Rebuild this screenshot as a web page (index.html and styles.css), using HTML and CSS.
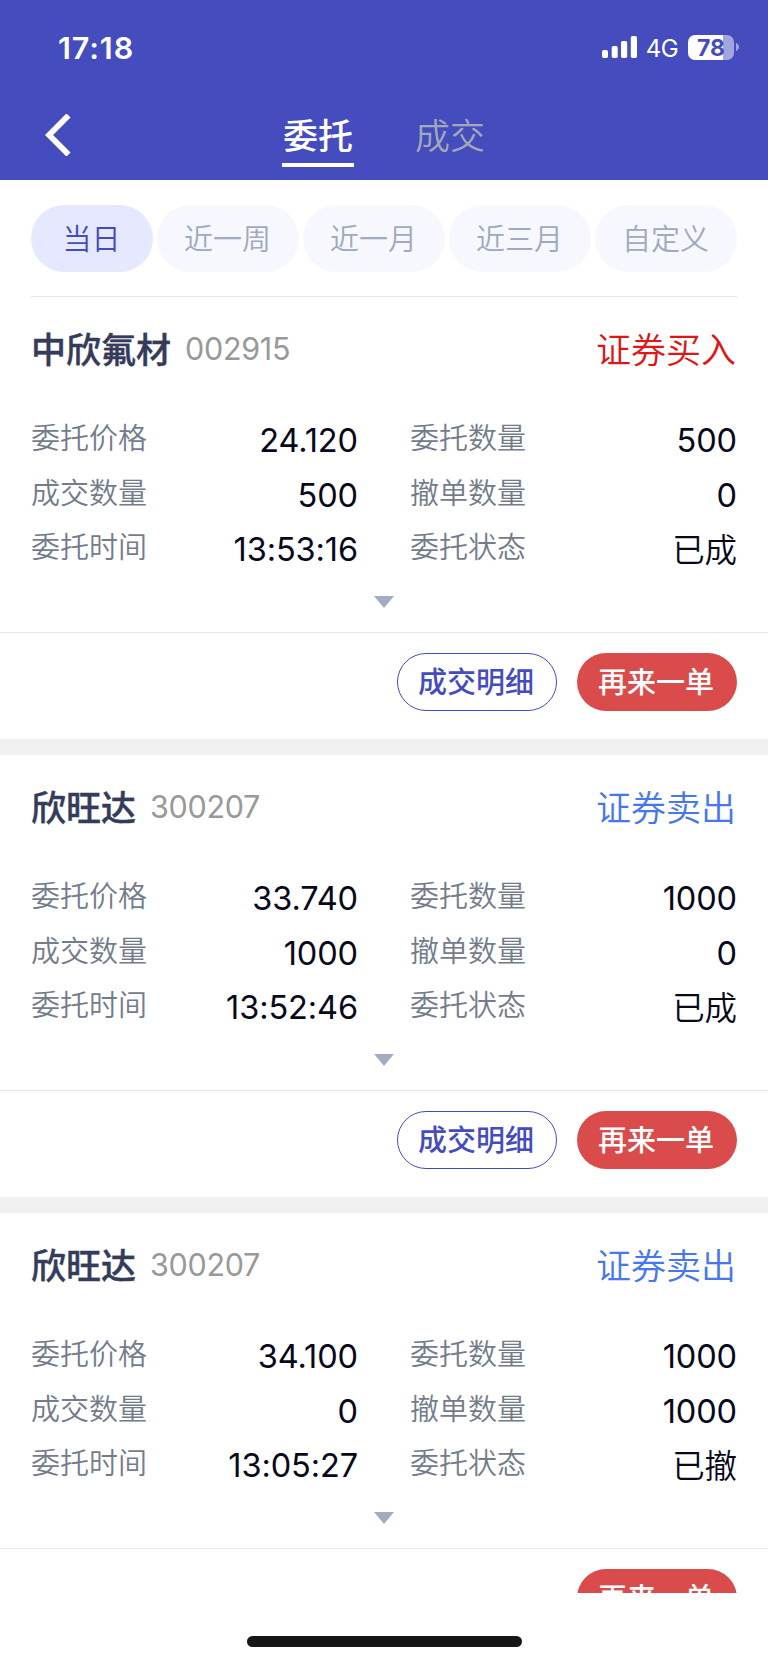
FILE: index.html
```html
<!DOCTYPE html>
<html lang="zh-CN">
<head>
<meta charset="utf-8">
<title>委托</title>
<link rel="stylesheet" href="styles.css">
</head>
<body>
<div class="screen">
	<div class="header">
		<div class="statusbar">
			<span class="time">17:18</span>
			<div class="status">
				<svg class="signal" width="35" height="22" viewBox="0 0 35 22" fill="#fff">
					<rect x="0" y="14" width="6" height="8" rx="1.8"/>
					<rect x="9.7" y="10" width="6" height="12" rx="1.8"/>
					<rect x="19" y="5" width="6.2" height="17" rx="1.8"/>
					<rect x="28.8" y="0" width="6.2" height="22" rx="1.8"/>
				</svg>
				<span class="network">4G</span>
				<div class="battery"><span>78</span></div>
				<svg class="cap" width="3" height="8" viewBox="0 0 3 8"><path d="M0 0C4 1.500 4 6.500 0 8Z" fill="#a2a5de"/></svg>
			</div>
		</div>
		<div class="nav">
			<svg class="back" width="26" height="42" viewBox="0 0 26 42"><path d="M23.500 1.500L4 21L23.500 40.500" fill="none" stroke="#fff" stroke-width="5.800"/></svg>
			<span class="tab active">委托</span>
			<span class="tab">成交</span>
		</div>
	</div>

	<div class="filters">
		<span class="pill on">当日</span>
		<span class="pill">近一周</span>
		<span class="pill">近一月</span>
		<span class="pill">近三月</span>
		<span class="pill">自定义</span>
	</div>

	<div class="list">
		<div class="card">
			<div class="title"><b>中欣氟材</b><span class="code">002915</span><span class="side buy">证券买入</span></div>
			<div class="grid">
				<label>委托价格</label><span>24.120</span><label class="second">委托数量</label><span>500</span>
				<label>成交数量</label><span>500</span><label class="second">撤单数量</label><span>0</span>
				<label>委托时间</label><span>13:53:16</span><label class="second">委托状态</label><span class="cn">已成</span>
			</div>
			<div class="more"></div>
			<div class="actions"><a class="btn detail">成交明细</a><a class="btn again">再来一单</a></div>
		</div>

		<div class="card">
			<div class="title"><b>欣旺达</b><span class="code">300207</span><span class="side sell">证券卖出</span></div>
			<div class="grid">
				<label>委托价格</label><span>33.740</span><label class="second">委托数量</label><span>1000</span>
				<label>成交数量</label><span>1000</span><label class="second">撤单数量</label><span>0</span>
				<label>委托时间</label><span>13:52:46</span><label class="second">委托状态</label><span class="cn">已成</span>
			</div>
			<div class="more"></div>
			<div class="actions"><a class="btn detail">成交明细</a><a class="btn again">再来一单</a></div>
		</div>

		<div class="card">
			<div class="title"><b>欣旺达</b><span class="code">300207</span><span class="side sell">证券卖出</span></div>
			<div class="grid">
				<label>委托价格</label><span>34.100</span><label class="second">委托数量</label><span>1000</span>
				<label>成交数量</label><span>0</span><label class="second">撤单数量</label><span>1000</span>
				<label>委托时间</label><span>13:05:27</span><label class="second">委托状态</label><span class="cn">已撤</span>
			</div>
			<div class="more"></div>
			<div class="actions"><a class="btn again">再来一单</a></div>
		</div>
	</div>

	<div class="home"><i></i></div>
</div>
</body>
</html>
```

FILE: styles.css
```css
* {
	box-sizing: border-box;
}

body {
	margin: 0;
	background: #fff;
	font-family: Inter, "Noto Sans CJK SC", sans-serif;
}

.screen {
	display: flex;
	flex-direction: column;
	width: 768px;
	height: 1663px;
	overflow: hidden;
}

/* header */
.header {
	height: 180px;
	background: #444cbe;
	color: #fff;
}

.statusbar {
	display: flex;
	justify-content: space-between;
	height: 94px;
	padding: 0 29px 0 58px;
	align-items: center;
}

.time {
	font-size: 30.5px;
	font-weight: 600;
	letter-spacing: 0.9px;
}

.status {
	display: flex;
	align-items: center;
}

.network {
	margin: 2px 10px 0 9px;
	font-size: 24px;
	letter-spacing: -0.6px;
}

.battery {
	width: 46px;
	height: 25px;
	border-radius: 7px;
	background: linear-gradient(to right, #fff 35px, #a2a5de 35px);
	color: #444cbe;
	font-size: 23px;
	font-weight: 700;
	line-height: 26px;
	text-align: center;
}

.cap {
	margin-left: 2px;
}

.nav {
	display: flex;
	height: 86px;
	padding-left: 45px;
}

.back {
	margin: 20px 211px 0 0;
}

.tab {
	width: 72px;
	height: 73px;
	margin-right: 60px;
	color: #a0a8b9;
	font-family: "Noto Sans CJK SC", sans-serif;
	font-size: 35px;
	font-weight: 350;
	line-height: 80px;
	text-align: center;
	white-space: nowrap;
}

.tab.active {
	color: #fff;
	font-weight: 500;
	border-bottom: 4px solid #fff;
}

/* date range */
.filters {
	display: flex;
	justify-content: space-between;
	height: 117px;
	margin: 0 31px;
	padding-top: 25px;
	border-bottom: 1px solid #e5e6e8;
}

.pill {
	width: 142px;
	height: 67px;
	padding-right: 1px;
	border-radius: 34px;
	background: #f7f8fd;
	color: #a0a9c0;
	font-family: "Noto Sans CJK SC", sans-serif;
	font-size: 29px;
	font-weight: 350;
	line-height: 65px;
	text-align: center;
}

.pill.on {
	width: 122px;
	background: #e5e8ff;
	color: #444cbe;
}

/* orders */
.list {
	height: 1296px;
	overflow: hidden;
}

.card {
	height: 458px;
	border-bottom: 16px solid #f1f1f1;
}

.title {
	display: flex;
	height: 114px;
	padding: 0 32px 0 31px;
	line-height: 101px;
	font-family: "Noto Sans CJK SC", sans-serif;
	font-size: 35px;
}

.title b {
	color: #353b5a;
	font-weight: 500;
	-webkit-text-stroke: 0.4px #353b5a;
}

.code {
	margin-left: 14px;
	color: #999;
	font-family: Inter, sans-serif;
	font-size: 30.5px;
	font-weight: 400;
	letter-spacing: -0.3px;
	line-height: 104px;
}

.side {
	margin-left: auto;
	font-weight: 350;
}

.buy {
	color: #e01515;
}

.sell {
	color: #4677ee;
}

.grid {
	display: grid;
	grid-template-columns: 160px 167px 168px 1fr;
	grid-auto-rows: 54.7px;
	padding: 0 31px;
	line-height: 52px;
}

.grid label {
	color: #747b8b;
	font-family: "Noto Sans CJK SC", sans-serif;
	font-size: 29px;
	font-weight: 350;
	line-height: 51px;
}

.grid .second {
	padding-left: 52px;
}

.grid span {
	padding-top: 4px;
	color: #08081b;
	font-size: 32.5px;
	letter-spacing: -0.1px;
	text-align: right;
}

.grid .cn {
	padding-top: 2px;
	font-family: "Noto Sans CJK SC", sans-serif;
	font-weight: 350;
}

.more {
	width: 20px;
	height: 12px;
	margin: 21px auto 24px;
	background: #a2acc3;
	clip-path: polygon(0 0, 100% 0, 50% 100%);
}

.actions {
	display: flex;
	justify-content: flex-end;
	gap: 20px;
	padding: 20px 31px 0;
	border-top: 1px solid #e7e7e9;
}

.btn {
	width: 160px;
	height: 58px;
	padding-right: 2px;
	border-radius: 29px;
	font-family: "Noto Sans CJK SC", sans-serif;
	font-size: 29px;
	font-weight: 500;
	line-height: 54px;
	text-align: center;
}

.detail {
	border: 1px solid #444cbe;
	color: #444cbe;
	line-height: 52px;
}

.again {
	background: #da4b4b;
	color: #fff;
}

/* home indicator */
.home {
	flex: 1;
	padding-top: 43px;
}

.home i {
	display: block;
	width: 275px;
	height: 11px;
	margin: 0 auto;
	border-radius: 6px;
	background: #161616;
}
```
